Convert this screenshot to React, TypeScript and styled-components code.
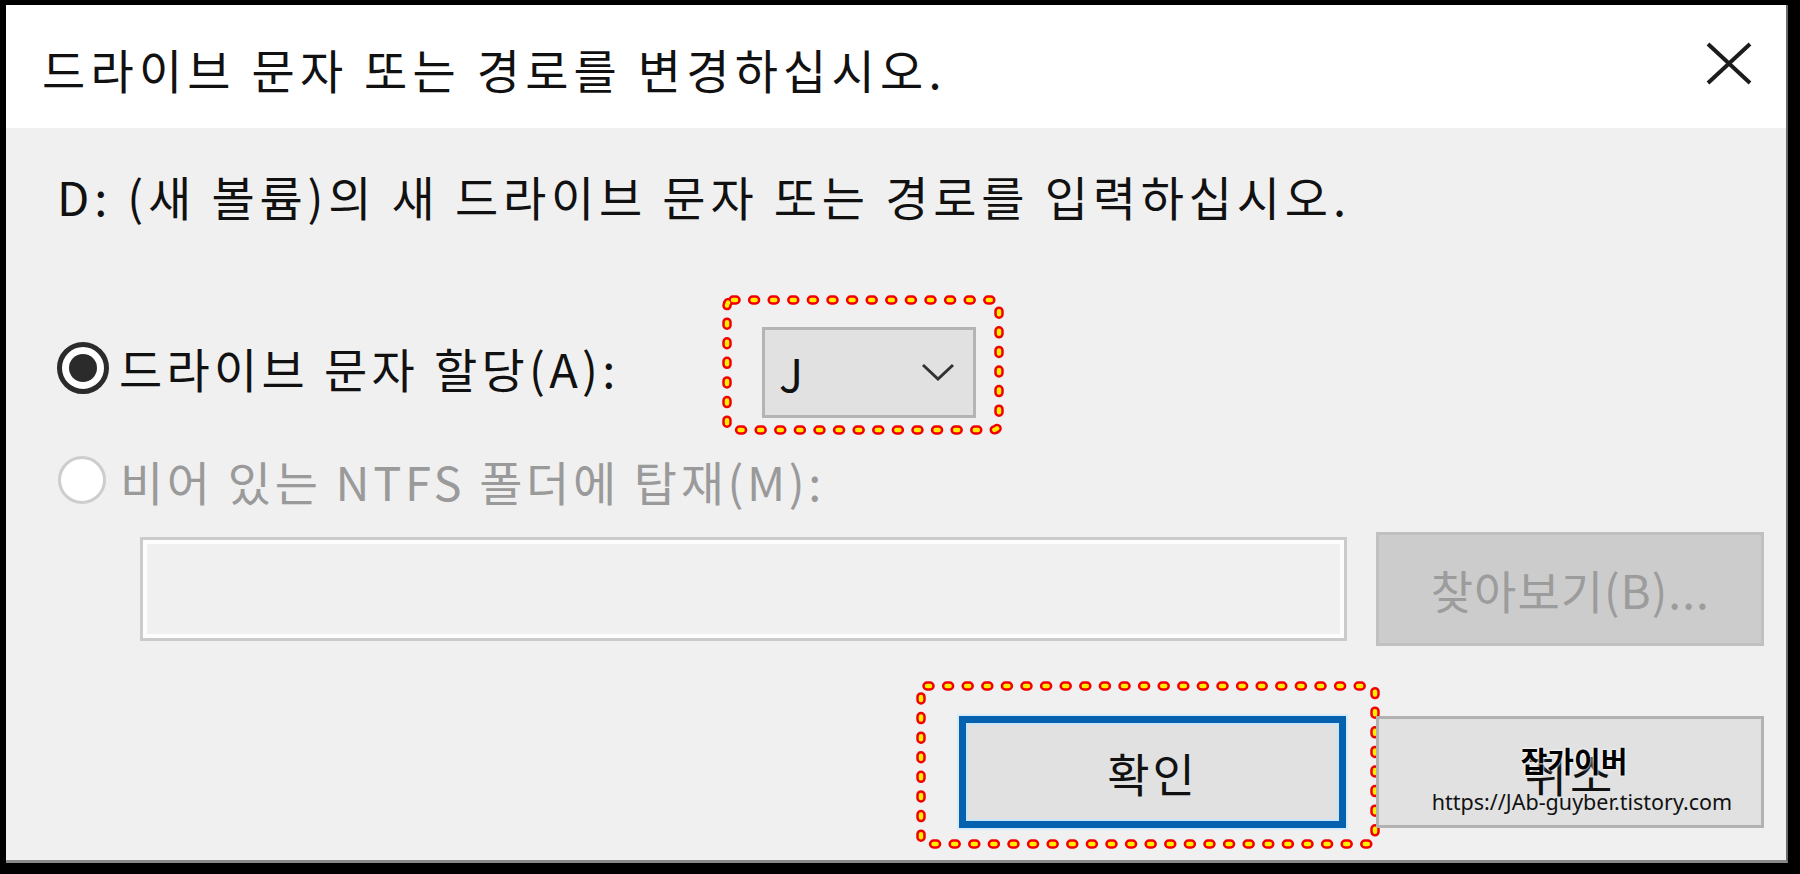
import React from 'react';
import styled, { createGlobalStyle } from 'styled-components';

const FONT = `"Noto Sans CJK KR", "Noto Sans", sans-serif`;

const GlobalStyle = createGlobalStyle`
  html, body {
    margin: 0;
    padding: 0;
    background: #000;
  }
  body {
    font-family: ${FONT};
  }
`;

const Frame = styled.div`
  width: 1800px;
  height: 874px;
  box-sizing: border-box;
  padding: 5px 12px 11px 6px;
  background: #000;
`;

const Dialog = styled.div`
  height: 100%;
  display: flex;
  flex-direction: column;
  background: #f0f0f0;
  border-right: 2px solid #6a6a6a;
  border-bottom: 3px solid #8a8a8a;
  box-sizing: border-box;
`;

const TitleBar = styled.div`
  height: 123px;
  flex: 0 0 auto;
  display: flex;
  align-items: flex-start;
  justify-content: space-between;
  background: #fff;
  padding: 0 34px 0 36px;
`;

const Title = styled.div`
  margin-top: 40px;
  font-size: 47px;
  line-height: 47px;
  letter-spacing: 5.2px;
  color: #111;
`;

const CloseButton = styled.div`
  margin-top: 37px;
  width: 46px;
  height: 43px;
  display: flex;
  align-items: center;
  justify-content: center;
`;

const Body = styled.div`
  flex: 1;
  display: flex;
  flex-direction: column;
  padding: 0 22px 0 51px;
`;

const Instruction = styled.div`
  margin-top: 44px;
  font-size: 47px;
  line-height: 47px;
  letter-spacing: 4.8px;
  color: #111;
`;

const OptionRow = styled.div<{ $top: number; $height: number }>`
  margin-top: ${(p) => p.$top}px;
  height: ${(p) => p.$height}px;
  display: flex;
  align-items: center;
`;

const Radio = styled.div<{ $checked?: boolean }>`
  flex: 0 0 auto;
  box-sizing: border-box;
  width: ${(p) => (p.$checked ? 52 : 48)}px;
  height: ${(p) => (p.$checked ? 52 : 48)}px;
  border-radius: 50%;
  background: #fff;
  border: ${(p) => (p.$checked ? '5px solid #2b2b2b' : '3px solid #cdcdcd')};
  display: flex;
  align-items: center;
  justify-content: center;
  margin-left: ${(p) => (p.$checked ? 0 : 1)}px;

  &::after {
    content: '';
    display: ${(p) => (p.$checked ? 'block' : 'none')};
    width: 28px;
    height: 28px;
    border-radius: 50%;
    background: #2b2b2b;
  }
`;

const OptionLabel = styled.div<{ $disabled?: boolean; $width?: number }>`
  flex: 0 0 auto;
  width: ${(p) => (p.$width ? `${p.$width}px` : 'auto')};
  margin-left: ${(p) => (p.$disabled ? 14 : 10)}px;
  font-size: 47px;
  line-height: 47px;
  letter-spacing: ${(p) => (p.$disabled ? 3.6 : 4.3)}px;
  color: ${(p) => (p.$disabled ? '#9a9a9a' : '#111')};
`;

const Anchor = styled.div`
  position: relative;
  flex: 0 0 auto;
`;

const Combo = styled.div`
  box-sizing: border-box;
  width: 214px;
  height: 91px;
  margin-top: 9px;
  display: flex;
  align-items: center;
  justify-content: space-between;
  padding: 0 18px 0 14px;
  background: #e1e1e1;
  border: 3px solid #b4b4b4;
  font-size: 45px;
  line-height: 45px;
  color: #111;
`;

const HighlightSvg = styled.svg<{ $left: number; $top: number }>`
  position: absolute;
  left: ${(p) => p.$left}px;
  top: ${(p) => p.$top}px;
  pointer-events: none;
  overflow: visible;
`;

const PathRow = styled.div`
  margin-top: 24px;
  display: flex;
  align-items: center;
  padding-left: 83px;
  gap: 29px;
`;

const PathInput = styled.div`
  box-sizing: border-box;
  width: 1209px;
  height: 104px;
  background: #f0f0f0;
  border: 3px solid #cbcbcb;
  box-shadow: inset 0 0 0 4px #fdfdfd;
`;

const Button = styled.div<{ $variant?: 'default' | 'disabled' | 'primary' }>`
  box-sizing: border-box;
  width: ${(p) => (p.$variant === 'primary' ? 387 : 388)}px;
  height: ${(p) => (p.$variant === 'disabled' ? 114 : 112)}px;
  display: flex;
  align-items: center;
  justify-content: center;
  font-size: 46px;
  line-height: 46px;
  letter-spacing: ${(p) => (p.$variant === 'disabled' ? 1 : 3)}px;
  background: ${(p) => (p.$variant === 'disabled' ? '#cccccc' : '#e1e1e1')};
  color: ${(p) => (p.$variant === 'disabled' ? '#9c9c9c' : '#111')};
  border: ${(p) =>
    p.$variant === 'primary'
      ? '7px solid #0560ad'
      : p.$variant === 'disabled'
      ? '3px solid #c0c0c0'
      : '3px solid #b2b2b2'};
  box-shadow: ${(p) =>
    p.$variant === 'primary'
      ? 'inset 0 0 0 2px #c9e4f8, 0 0 0 2px #d6ecfb'
      : 'none'};
`;

const ButtonRow = styled.div`
  margin-top: 70px;
  display: flex;
  justify-content: flex-end;
  gap: 30px;
`;

const Watermark = styled.div`
  position: absolute;
  left: 0;
  right: 0;
  top: 27px;
  display: flex;
  flex-direction: column;
  align-items: center;
  pointer-events: none;
  padding-left: 8px;
`;

const WatermarkName = styled.div`
  font-size: 29px;
  line-height: 34px;
  font-weight: 700;
  color: #000;
  text-shadow: 0 0 3px #fff, 0 0 2px #fff;
`;

const WatermarkUrl = styled.div`
  margin-top: 13px;
  margin-left: 16px;
  font-family: "Noto Sans", sans-serif;
  font-size: 21.5px;
  line-height: 24px;
  color: #111;
`;

interface IHighlightProps {
  left: number;
  top: number;
  width: number;
  height: number;
}

const Highlight: React.FC<IHighlightProps> = (props) => {
  const { left, top, width, height } = props;
  const rect = {
    x: 5,
    y: 5,
    width: width - 10,
    height: height - 10,
    rx: 6,
    fill: 'none',
    strokeDasharray: '3 16.6',
    strokeLinecap: 'round' as const,
  };

  return (
    <HighlightSvg
      $left={left}
      $top={top}
      width={width}
      height={height}
      viewBox={`0 0 ${width} ${height}`}
    >
      <rect {...rect} stroke="#f20000" strokeWidth={9.5} />
      <rect {...rect} stroke="#ffee00" strokeWidth={4.5} />
    </HighlightSvg>
  );
};

const App: React.FC = () => {
  return (
    <>
      <GlobalStyle />
      <Frame>
        <Dialog>
          <TitleBar>
            <Title>드라이브 문자 또는 경로를 변경하십시오.</Title>
            <CloseButton>
              <svg width="46" height="43" viewBox="0 0 46 43">
                <path
                  d="M2 2 L44 41 M44 2 L2 41"
                  stroke="#1c1c1c"
                  strokeWidth="4"
                  fill="none"
                />
              </svg>
            </CloseButton>
          </TitleBar>

          <Body>
            <Instruction>
              D: (새 볼륨)의 새 드라이브 문자 또는 경로를 입력하십시오.
            </Instruction>

            <OptionRow $top={103} $height={91}>
              <Radio $checked />
              <OptionLabel $width={643}>드라이브 문자 할당(A):</OptionLabel>
              <Anchor>
                <Combo>
                  <span>J</span>
                  <svg width="34" height="18" viewBox="0 0 34 18">
                    <path
                      d="M2 2 L17 16 L32 2"
                      stroke="#333"
                      strokeWidth="3"
                      fill="none"
                    />
                  </svg>
                </Combo>
                <Highlight left={-40} top={-23} width={282} height={140} />
              </Anchor>
            </OptionRow>

            <OptionRow $top={39} $height={56}>
              <Radio />
              <OptionLabel $disabled>비어 있는 NTFS 폴더에 탑재(M):</OptionLabel>
            </OptionRow>

            <PathRow>
              <PathInput />
              <Button $variant="disabled">찾아보기(B)...</Button>
            </PathRow>

            <ButtonRow>
              <Anchor>
                <Button $variant="primary">확인</Button>
                <Highlight left={-43} top={-35} width={464} height={168} />
              </Anchor>
              <Anchor>
                <Button>취소</Button>
                <Watermark>
                  <WatermarkName>잡가이버</WatermarkName>
                  <WatermarkUrl>https://JAb-guyber.tistory.com</WatermarkUrl>
                </Watermark>
              </Anchor>
            </ButtonRow>
          </Body>
        </Dialog>
      </Frame>
    </>
  );
};

export default App;
